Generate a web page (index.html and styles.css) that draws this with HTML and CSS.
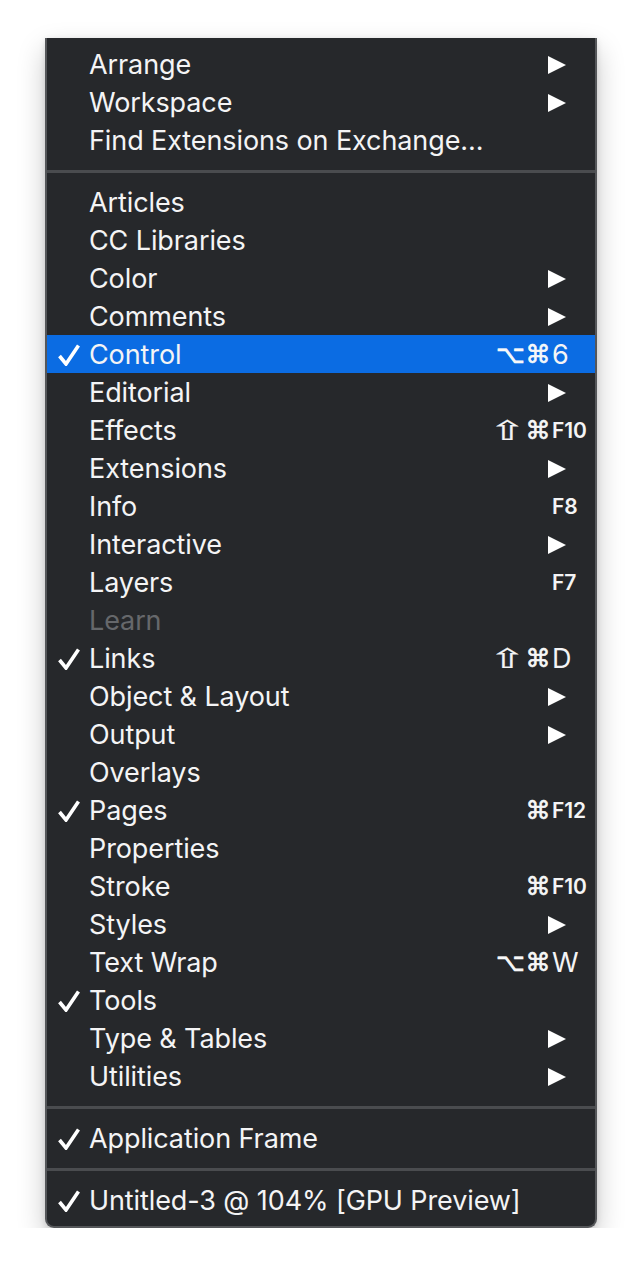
FILE: index.html
```html
<!DOCTYPE html>
<html>
<head>
<meta charset="utf-8">
<link rel="stylesheet" href="styles.css">
</head>
<body>
<div class="menu">
  <div class="row"><span class="chk"></span><span class="lbl">Arrange</span><span class="mods"></span><span class="key"><span class="arrow"></span></span></div>
  <div class="row"><span class="chk"></span><span class="lbl">Workspace</span><span class="mods"></span><span class="key"><span class="arrow"></span></span></div>
  <div class="row"><span class="chk"></span><span class="lbl">Find Extensions on Exchange...</span><span class="mods"></span><span class="key"></span></div>
  <div class="sep"></div>
  <div class="row"><span class="chk"></span><span class="lbl">Articles</span><span class="mods"></span><span class="key"></span></div>
  <div class="row"><span class="chk"></span><span class="lbl">CC Libraries</span><span class="mods"></span><span class="key"></span></div>
  <div class="row"><span class="chk"></span><span class="lbl">Color</span><span class="mods"></span><span class="key"><span class="arrow"></span></span></div>
  <div class="row"><span class="chk"></span><span class="lbl">Comments</span><span class="mods"></span><span class="key"><span class="arrow"></span></span></div>
  <div class="row sel"><span class="chk"><svg viewBox="0 0 22 22" class="ck"><path d="M1.5 12 L8 20 L20.5 1.5"/></svg></span><span class="lbl">Control</span><span class="mods"><span class="m">⌥</span><span class="m">⌘</span></span><span class="key">6</span></div>
  <div class="row"><span class="chk"></span><span class="lbl">Editorial</span><span class="mods"></span><span class="key"><span class="arrow"></span></span></div>
  <div class="row"><span class="chk"></span><span class="lbl">Effects</span><span class="mods"><span class="m shm"><span class="sh">⇧</span></span><span class="m">⌘</span></span><span class="key fk">F10</span></div>
  <div class="row"><span class="chk"></span><span class="lbl">Extensions</span><span class="mods"></span><span class="key"><span class="arrow"></span></span></div>
  <div class="row"><span class="chk"></span><span class="lbl">Info</span><span class="mods"></span><span class="key fk">F8</span></div>
  <div class="row"><span class="chk"></span><span class="lbl">Interactive</span><span class="mods"></span><span class="key"><span class="arrow"></span></span></div>
  <div class="row"><span class="chk"></span><span class="lbl">Layers</span><span class="mods"></span><span class="key fk">F7</span></div>
  <div class="row dis"><span class="chk"></span><span class="lbl">Learn</span><span class="mods"></span><span class="key"></span></div>
  <div class="row"><span class="chk"><svg viewBox="0 0 22 22" class="ck"><path d="M1.5 12 L8 20 L20.5 1.5"/></svg></span><span class="lbl">Links</span><span class="mods"><span class="m shm"><span class="sh">⇧</span></span><span class="m">⌘</span></span><span class="key">D</span></div>
  <div class="row"><span class="chk"></span><span class="lbl">Object &amp; Layout</span><span class="mods"></span><span class="key"><span class="arrow"></span></span></div>
  <div class="row"><span class="chk"></span><span class="lbl">Output</span><span class="mods"></span><span class="key"><span class="arrow"></span></span></div>
  <div class="row"><span class="chk"></span><span class="lbl">Overlays</span><span class="mods"></span><span class="key"></span></div>
  <div class="row"><span class="chk"><svg viewBox="0 0 22 22" class="ck"><path d="M1.5 12 L8 20 L20.5 1.5"/></svg></span><span class="lbl">Pages</span><span class="mods"><span class="m">⌘</span></span><span class="key fk">F12</span></div>
  <div class="row"><span class="chk"></span><span class="lbl">Properties</span><span class="mods"></span><span class="key"></span></div>
  <div class="row"><span class="chk"></span><span class="lbl">Stroke</span><span class="mods"><span class="m">⌘</span></span><span class="key fk">F10</span></div>
  <div class="row"><span class="chk"></span><span class="lbl">Styles</span><span class="mods"></span><span class="key"><span class="arrow"></span></span></div>
  <div class="row"><span class="chk"></span><span class="lbl">Text Wrap</span><span class="mods"><span class="m">⌥</span><span class="m">⌘</span></span><span class="key">W</span></div>
  <div class="row"><span class="chk"><svg viewBox="0 0 22 22" class="ck"><path d="M1.5 12 L8 20 L20.5 1.5"/></svg></span><span class="lbl">Tools</span><span class="mods"></span><span class="key"></span></div>
  <div class="row"><span class="chk"></span><span class="lbl">Type &amp; Tables</span><span class="mods"></span><span class="key"><span class="arrow"></span></span></div>
  <div class="row"><span class="chk"></span><span class="lbl">Utilities</span><span class="mods"></span><span class="key"><span class="arrow"></span></span></div>
  <div class="sep"></div>
  <div class="row"><span class="chk"><svg viewBox="0 0 22 22" class="ck"><path d="M1.5 12 L8 20 L20.5 1.5"/></svg></span><span class="lbl">Application Frame</span><span class="mods"></span><span class="key"></span></div>
  <div class="sep"></div>
  <div class="row"><span class="chk"><svg viewBox="0 0 22 22" class="ck"><path d="M1.5 12 L8 20 L20.5 1.5"/></svg></span><span class="lbl">Untitled-3 @ 104% [GPU Preview]</span><span class="mods"></span><span class="key"></span></div>
</div>
</body>
</html>
```
FILE: styles.css
```css
html, body {
  margin: 0;
  padding: 0;
  background: #ffffff;
}
body {
  padding-top: 38px;
  font-family: Inter, "Noto Sans", sans-serif;
}
.menu {
  box-sizing: border-box;
  margin-left: 45px;
  width: 552px;
  background: #26282b;
  border: 2px solid #55575a;
  border-top: none;
  border-radius: 0 0 9px 9px;
  padding: 7px 0;
  box-shadow: 0 12px 28px rgba(0, 0, 0, 0.22), 0 2px 6px rgba(0, 0, 0, 0.12);
}
.row {
  display: grid;
  grid-template-columns: 42px 1fr auto 43px;
  align-items: center;
  height: 38px;
  color: #f4f4f5;
  font-size: 27px;
  font-weight: 430;
  letter-spacing: -0.1px;
}
.row.sel {
  background: #0b6ce3;
}
.row.dis {
  color: #66686b;
}
.chk {
  display: flex;
  align-items: center;
  padding-left: 11px;
  height: 38px;
}
.ck {
  width: 22px;
  height: 22px;
  fill: none;
  stroke: #ffffff;
  stroke-width: 3.6;
  stroke-linecap: butt;
  stroke-linejoin: miter;
}
.lbl {
  white-space: nowrap;
  line-height: 39px;
}
.mods {
  display: flex;
  justify-content: flex-end;
}
.m {
  display: inline-block;
  width: 28px;
  text-align: center;
  font-family: "DejaVu Sans", sans-serif;
  font-size: 25px;
  font-weight: 400;
  line-height: 38px;
  -webkit-text-stroke: 0.6px #ffffff;
}
.m.shm {
  margin-right: 3px;
}
.sh {
  display: inline-block;
  font-size: 25px;
  transform: scale(1.75, 1.08);
  -webkit-text-stroke: 0.2px #ffffff;
}
.key {
  display: flex;
  align-items: center;
  height: 38px;
  line-height: 38px;
  font-size: 27px;
}
.key.fk {
  font-size: 21px;
  font-weight: 600;
}
.arrow {
  width: 0;
  height: 0;
  margin-left: -4px;
  border-left: 18px solid #ffffff;
  border-top: 9px solid transparent;
  border-bottom: 9px solid transparent;
}
.sep {
  height: 3px;
  background: #4a4c4f;
  margin: 11px 0 10px;
}
```
